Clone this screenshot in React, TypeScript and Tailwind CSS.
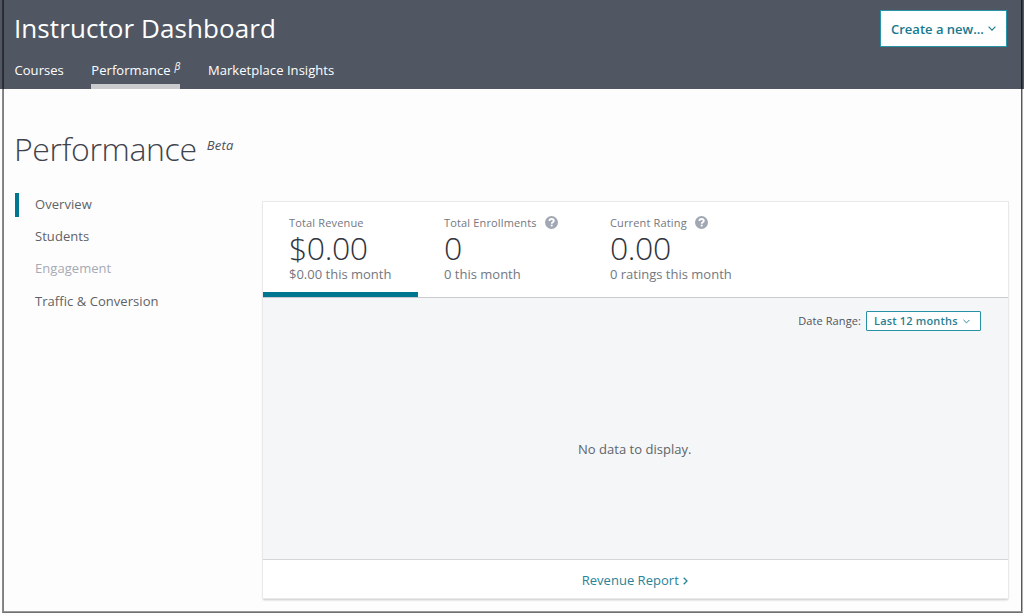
import type { ReactNode } from 'react';

interface Stat {
  label: string;
  value: string;
  detail: string;
  hasHelp: boolean;
  className: string;
}

const NAV_ITEMS = [
  { label: 'Courses', active: false },
  { label: 'Performance', beta: true, active: true },
  { label: 'Marketplace Insights', active: false },
];

const MENU_ITEMS = [
  { label: 'Overview', className: 'border-[#007791] text-[#5f6266]' },
  { label: 'Students', className: 'border-transparent text-[#5f6266]' },
  { label: 'Engagement', className: 'border-transparent text-[#a6aab4]' },
  { label: 'Traffic & Conversion', className: 'border-transparent text-[#5f6266]' },
];

const STATS: Stat[] = [
  {
    label: 'Total Revenue',
    value: '$0.00',
    detail: '$0.00 this month',
    hasHelp: false,
    className: 'w-[155px] border-b-[5px] border-[#007791]',
  },
  {
    label: 'Total Enrollments',
    value: '0',
    detail: '0 this month',
    hasHelp: true,
    className: 'w-[166px]',
  },
  {
    label: 'Current Rating',
    value: '0.00',
    detail: '0 ratings this month',
    hasHelp: true,
    className: 'w-[180px]',
  },
];

function Chevron({ className }: { className: string }) {
  return (
    <svg viewBox="0 0 8 5" className={className} fill="none" stroke="currentColor" strokeWidth="1.1">
      <path d="M0.6 0.7 4 4.1 7.4 0.7" />
    </svg>
  );
}

function HelpIcon() {
  return (
    <svg viewBox="0 0 12 12" className="-mt-px ml-2 size-[13px]" fill="none">
      <circle cx="6" cy="6" r="6" fill="#a1a7b3" />
      <path d="M4 4.6C4 3.4 4.9 2.8 6 2.8s2.1.6 2.1 1.7C8.1 5.8 6.2 5.8 6.2 7.2" stroke="#fff" strokeWidth="1.7" />
      <path d="M5.3 8h1.7v1.6H5.3z" fill="#fff" />
    </svg>
  );
}

function Header() {
  return (
    <header className="flex h-[89px] justify-between bg-[#505763] pr-[17px] pl-[14px] text-white">
      <div className="flex flex-col">
        <h1 className="mt-[10px] h-9 text-[26px] leading-9 tracking-[0.08px]">Instructor Dashboard</h1>
        <nav className="mt-[14px] flex gap-[27.5px] pl-[0.5px] text-[13px] leading-5 tracking-[0.05px]">
          {NAV_ITEMS.map((item) => (
            <a
              key={item.label}
              className={
                item.active
                  ? 'flex h-[29px] border-b-[5px] border-[#cacbcd]'
                  : 'flex h-[29px]'
              }
            >
              {item.label}
              {item.beta && <i className="-mt-[4px] ml-1 text-[10px] leading-5">β</i>}
            </a>
          ))}
        </nav>
      </div>
      <button className="mt-[10px] flex h-[37px] w-[127px] items-center border border-[#2794aa] bg-white pt-0.5 pl-[10px] text-[13px] font-semibold text-[#16788e]">
        Create a new...
        <Chevron className="-mt-0.5 ml-1 h-[5px] w-2" />
      </button>
    </header>
  );
}

function StatTab({ stat }: { stat: Stat }) {
  return (
    <div className={`h-[95px] pt-[13px] pl-[26px] whitespace-nowrap ${stat.className}`}>
      <div className="flex h-4 items-center text-[11px] tracking-[0.15px] text-[#737780]">
        {stat.label}
        {stat.hasHelp && <HelpIcon />}
      </div>
      <div className="h-[34px] text-[32px] leading-[34px] font-light tracking-[-0.4px] text-[#30343e]">
        {stat.value}
      </div>
      <div className="h-[18px] text-[13px] leading-[18px] text-[#737780]">{stat.detail}</div>
    </div>
  );
}

function Card({ children }: { children: ReactNode }) {
  return (
    <section className="mt-[113px] flex h-[396px] w-[744.5px] flex-col bg-white shadow-[0_0_0_1px_#e8e9eb,0_2px_2px_#c8c8c8]">
      {children}
    </section>
  );
}

export default function App() {
  return (
    <div
      className="relative h-[616px] w-[1024px] overflow-hidden bg-[#fdfdfd]"
      style={{ fontFamily: '"Open Sans", "Noto Sans", sans-serif' }}
    >
      <Header />

      <main className="flex">
        {/* Sidebar */}
        <aside className="w-[263px] pl-[14px]">
          <div className="mt-[36px] flex h-12">
            <h2 className="text-[32px] leading-12 font-light tracking-[-0.35px] text-[#3e434d]">Performance</h2>
            <i className="mt-[10px] ml-[10px] text-[13px] leading-5 tracking-[0.3px] text-[#4b5059]">Beta</i>
          </div>
          <ul className="mt-[20px] ml-px flex flex-col gap-[8.2px] text-[13px] leading-[22px] tracking-[0.05px]">
            {MENU_ITEMS.map((item) => (
              <li key={item.label} className={`h-6 border-l-4 pl-4 ${item.className}`}>
                {item.label}
              </li>
            ))}
          </ul>
        </aside>

        <Card>
          <div className="flex h-24 border-b border-[#c9cbd1]">
            {STATS.map((stat) => (
              <StatTab key={stat.label} stat={stat} />
            ))}
          </div>

          {/* Chart area */}
          <div className="h-[262px] border-b border-[#d4d6da] bg-[#f5f6f8] pt-[13px]">
            <div className="flex h-5 items-center justify-end pr-[26.5px] text-[11px] tracking-[0.1px] text-[#50545c]">
              Date Range:
              <button className="ml-[5px] flex h-5 w-[115px] items-center rounded-[1px] border border-[#2990a6] bg-white pl-[7px] font-semibold tracking-[0.18px] text-[#2a7f94]">
                Last 12 months
                <Chevron className="ml-[5px] h-[5px] w-[7px]" />
              </button>
            </div>
            <p className="mt-[108px] pr-px text-center text-[13px] leading-5 tracking-[0.03px] text-[#606469]">
              No data to display.
            </p>
          </div>

          <a className="flex flex-1 items-center justify-center pt-1 pr-px text-[13px] tracking-[0.03px] text-[#2a8297]">
            Revenue Report
            <svg viewBox="0 0 5 8" className="ml-1 h-2 w-[5px]" fill="none" stroke="currentColor" strokeWidth="1.3">
              <path d="M0.7 0.7 4 4 0.7 7.3" />
            </svg>
          </a>
        </Card>
      </main>

      {/* Window frame */}
      <div className="pointer-events-none absolute top-0 left-[2px] h-[613px] w-[1021px] border-r border-b border-l border-r-black/30 border-b-black/55 border-l-black/45">
        <div className="h-full border-r border-b border-l border-r-black/65 border-b-black/40 border-l-black/50" />
      </div>
    </div>
  );
}
